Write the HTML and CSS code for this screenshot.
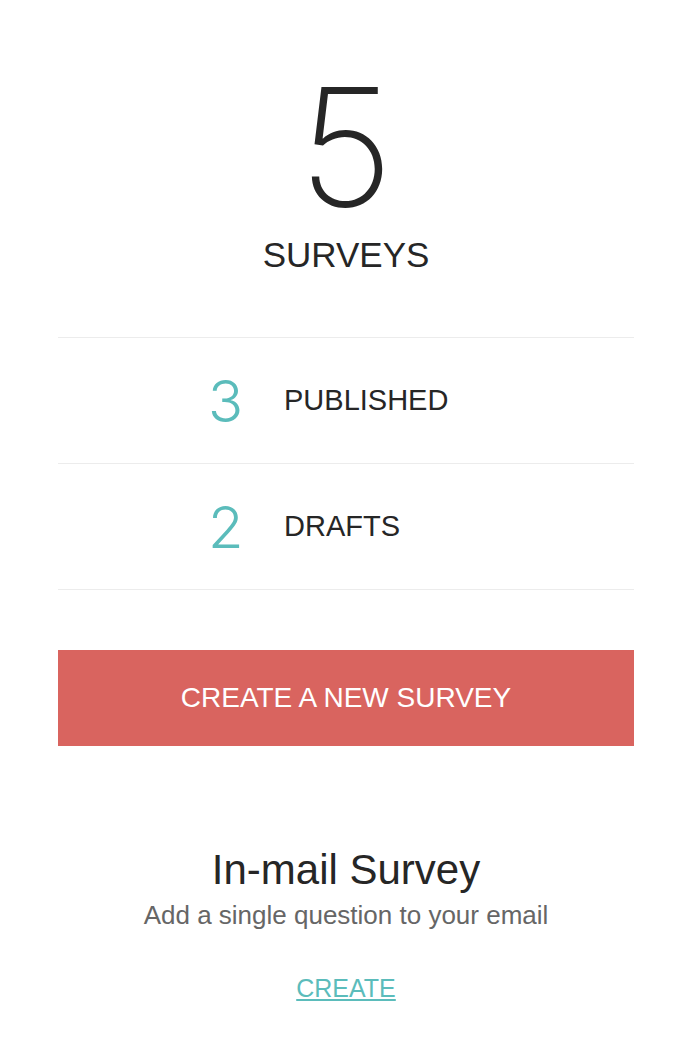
FILE: index.html
```html
<!DOCTYPE html>
<html lang="en">
<head>
    <meta charset="UTF-8">
    <meta name="viewport" content="width=device-width, initial-scale=1.0">
    <title>Surveys</title>
    <link rel="stylesheet" href="styles.css">
</head>
<body>

    <div class="summary">
        <div class="total_count">5</div>
        <div class="total_label">SURVEYS</div>
    </div>

    <div class="stats">
        <div class="stat_row">
            <span class="stat_count">3</span>
            <span class="stat_label">PUBLISHED</span>
        </div>
        <div class="stat_row">
            <span class="stat_count">2</span>
            <span class="stat_label">DRAFTS</span>
        </div>
    </div>

    <button class="create_button">CREATE A NEW SURVEY</button>

    <div class="inmail">
        <h2>In-mail Survey</h2>
        <p>Add a single question to your email</p>
        <a href="#" class="create_link">CREATE</a>
    </div>

</body>
</html>
```

FILE: styles.css
```css
body {
    font-family: 'Liberation Sans', Arial, sans-serif;
    background-color: #fff;
    color: #262626;
    margin: 0;
    padding: 0 56px 0 58px;
}

.summary {
    display: flex;
    flex-direction: column;
    align-items: center;
    padding-top: 65px;
}

.total_count {
    font-family: 'Inter', 'Roboto', sans-serif;
    font-weight: 200;
    font-size: 164px;
    line-height: 1;
}

.total_label {
    font-size: 35px;
    line-height: 40px;
    margin-top: 6px;
}

.stats {
    margin-top: 62px;
    border-top: 1px solid #ececec;
}

.stat_row {
    display: flex;
    align-items: center;
    height: 125px;
    border-bottom: 1px solid #ececec;
}

.stat_count {
    width: 76px;
    margin-left: 150px;
    font-family: 'Inter', 'Roboto', sans-serif;
    font-weight: 300;
    font-size: 58px;
    color: #5bbcbb;
}

.stat_label {
    font-size: 29px;
}

.create_button {
    display: block;
    width: 100%;
    height: 96px;
    margin-top: 60px;
    background-color: #d9645f;
    color: #fff;
    border: none;
    font-family: inherit;
    font-size: 28px;
    cursor: pointer;
}

.inmail {
    display: flex;
    flex-direction: column;
    align-items: center;
    margin-top: 100px;
}

.inmail h2 {
    font-weight: normal;
    font-size: 42px;
    line-height: 48px;
    margin: 0;
}

.inmail p {
    font-size: 26px;
    line-height: 30px;
    color: #666;
    margin: 6px 0 0;
}

.create_link {
    margin-top: 44px;
    font-size: 25px;
    color: #5bbcbb;
}
```
